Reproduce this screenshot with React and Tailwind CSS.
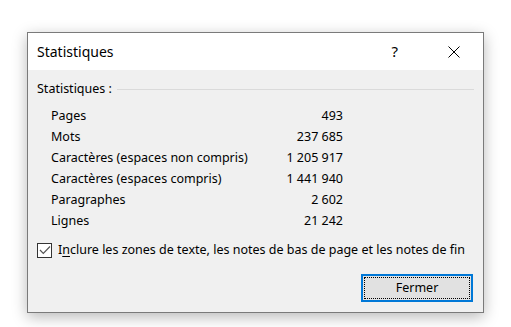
import React from "react";

const stats = [
  ["Pages", "493"],
  ["Mots", "237 685"],
  ["Caractères (espaces non compris)", "1 205 917"],
  ["Caractères (espaces compris)", "1 441 940"],
  ["Paragraphes", "2 602"],
  ["Lignes", "21 242"],
];

const App = () => {
  return (
    <div className="w-[511px] h-[327px] bg-white pl-[27px] pt-[32px] font-['Noto_Sans',sans-serif] text-black">
      <div className="w-[457px] h-[281px] border border-[#7a7a7a] bg-[#f0f0f0] flex flex-col shadow-[0_4px_14px_rgba(0,0,0,0.28)]">
        {/* title bar */}
        <div className="h-[37px] bg-white flex items-center pl-[9px] shrink-0">
          <span className="text-[14px] leading-none">Statistiques</span>
          <span className="ml-auto text-[15px] leading-none mr-[50px]">?</span>
          <svg width="12" height="12" viewBox="0 0 12 12" className="mr-[23px]">
            <path d="M0.5 0.5 L11.5 11.5 M11.5 0.5 L0.5 11.5" stroke="#000" strokeWidth="1" fill="none" />
          </svg>
        </div>

        <div className="flex flex-col pl-[9px] pr-[9px] pt-[11px] text-[12.5px]">
          <div className="flex items-center h-[16px]">
            <span className="leading-none">Statistiques :</span>
            <div className="flex-1 ml-[5px] h-px bg-[#dadada]" />
          </div>

          <div className="mt-[9px] pl-[14px] flex flex-col">
            {stats.map(([label, value]) => (
              <div key={label} className="w-[292px] h-[21px] flex items-center justify-between">
                <span>{label}</span>
                <span>{value}</span>
              </div>
            ))}
          </div>

          <label className="mt-[10px] h-[16px] flex items-center">
            <span className="w-[15px] h-[15px] border border-[#333] bg-white flex items-center justify-center">
              <svg width="12" height="10" viewBox="0 0 12 10">
                <path d="M1 5 L4.3 8.3 L11 1.5" stroke="#555" strokeWidth="1.2" fill="none" />
              </svg>
            </span>
            <span className="ml-[6px]">
              I<span className="underline underline-offset-2">n</span>clure les zones de texte, les notes de bas de page et les notes de fin
            </span>
          </label>

          <div className="mt-[16px] flex justify-end pr-[1px]">
            <button className="w-[112px] h-[28px] border-2 border-[#0078d7] bg-[#e1e1e1] p-[1px]">
              <div className="w-full h-full border border-dotted border-black flex items-center justify-center">
                <span>Fermer</span>
              </div>
            </button>
          </div>
        </div>
      </div>
    </div>
  );
};

export default App;
